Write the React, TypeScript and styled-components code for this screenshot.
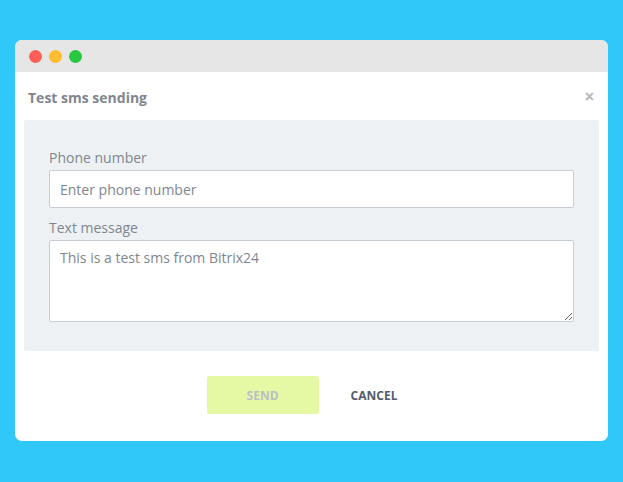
import styled, { createGlobalStyle } from "styled-components";

const GlobalStyle = createGlobalStyle`
  html, body {
    margin: 0;
    padding: 0;
    background: #2fc8f8;
  }
  * {
    box-sizing: border-box;
  }
`;

const Page = styled.div`
  min-height: 100vh;
  padding: 40px 15px 41px;
  font-family: "Open Sans", "Liberation Sans", sans-serif;
`;

const Window = styled.div`
  background: #fff;
  border-radius: 7px;
  overflow: hidden;
`;

const TitleBar = styled.div`
  height: 32px;
  background: #e6e6e6;
  display: flex;
  align-items: center;
  gap: 7px;
  padding: 1px 0 0 14px;
`;

const Dot = styled.span<{ $color: string }>`
  width: 13px;
  height: 13px;
  border-radius: 50%;
  background: ${(p) => p.$color};
`;

const Header = styled.div`
  height: 48px;
  display: flex;
  align-items: center;
  justify-content: space-between;
  padding: 2px 14px 0 13px;
`;

const Title = styled.h2`
  margin: 0;
  font-size: 14px;
  font-weight: 700;
  color: #80868e;
`;

const Close = styled.button`
  border: none;
  background: none;
  padding: 0;
  font-size: 16px;
  font-weight: 700;
  color: #b0b6bd;
  line-height: 1;
  cursor: pointer;
`;

const Panel = styled.div`
  margin: 0 9px;
  background: #edf1f4;
  border-radius: 2px;
  padding: 28px 25px 29px;
`;

const Label = styled.label`
  display: block;
  font-size: 14px;
  line-height: 20px;
  color: #80868e;
  margin-bottom: 2px;
`;

const Input = styled.input`
  display: block;
  width: 100%;
  height: 38px;
  border: 1px solid #c6cdd3;
  border-radius: 2px;
  background: #fff;
  padding: 0 10px;
  font-family: inherit;
  font-size: 14px;
  color: #80868e;
  outline: none;
  margin-bottom: 10px;

  &::placeholder {
    color: #80868e;
  }
`;

const TextArea = styled.textarea`
  display: block;
  width: 100%;
  height: 82px;
  border: 1px solid #c6cdd3;
  border-radius: 2px;
  background: #fff;
  padding: 7px 10px;
  font-family: inherit;
  font-size: 14px;
  line-height: 20px;
  color: #80868e;
  outline: none;
  resize: vertical;
`;

const Footer = styled.div`
  display: flex;
  justify-content: center;
  gap: 13px;
  padding: 25px 0 27px;
`;

const Button = styled.button<{ $primary?: boolean }>`
  height: 38px;
  border: none;
  border-radius: 2px;
  padding: 0 ${(p) => (p.$primary ? "40px" : "19px")};
  min-width: ${(p) => (p.$primary ? "112px" : "0")};
  background: ${(p) => (p.$primary ? "#e5f9a5" : "transparent")};
  color: ${(p) => (p.$primary ? "#b9c0c6" : "#535c69")};
  font-family: inherit;
  font-size: 12px;
  font-weight: 700;
  text-transform: uppercase;
  cursor: pointer;
`;

export default function App() {
  return (
    <>
      <GlobalStyle />
      <Page>
        <Window>
          <TitleBar>
            <Dot $color="#ff5f57" />
            <Dot $color="#febc2e" />
            <Dot $color="#28c840" />
          </TitleBar>
          <Header>
            <Title>Test sms sending</Title>
            <Close>×</Close>
          </Header>
          <Panel>
            <Label>Phone number</Label>
            <Input placeholder="Enter phone number" />
            <Label>Text message</Label>
            <TextArea defaultValue="This is a test sms from Bitrix24" />
          </Panel>
          <Footer>
            <Button $primary>Send</Button>
            <Button>Cancel</Button>
          </Footer>
        </Window>
      </Page>
    </>
  );
}
